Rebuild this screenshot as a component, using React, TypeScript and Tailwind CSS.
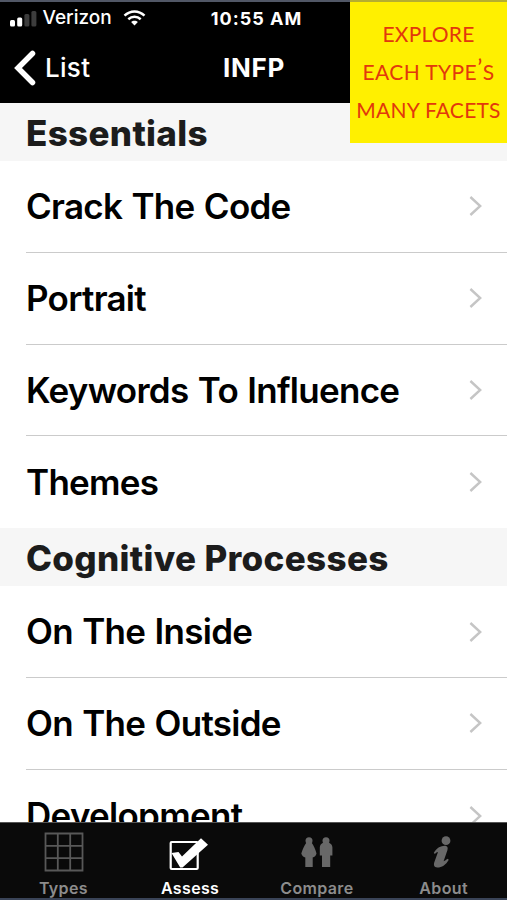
import type { ReactNode } from "react";
import clsx from "clsx";

const SECTIONS = [
  {
    title: "Essentials",
    rows: ["Crack The Code", "Portrait", "Keywords To Influence", "Themes"],
  },
  {
    title: "Cognitive Processes",
    rows: ["On The Inside", "On The Outside", "Development"],
  },
];

function SignalBars() {
  return (
    <svg width="28" height="18" viewBox="0 0 28 18" aria-hidden>
      <rect x="1" y="11" width="5" height="6.5" rx="1.5" fill="#fff" />
      <rect x="8.2" y="8.5" width="5" height="9" rx="1.5" fill="#fff" />
      <rect x="15.4" y="5" width="5" height="12.5" rx="1.5" fill="#3c3c3c" />
      <rect x="22.4" y="2" width="5" height="15.5" rx="1.5" fill="#3c3c3c" />
    </svg>
  );
}

function WifiIcon() {
  return (
    <svg width="23" height="16" viewBox="0 0 22 16" fill="none" aria-hidden>
      <path
        d="M1 5.6C6.8 0 15.2 0 21 5.6M4.8 9.2C8.4 6 13.6 6 17.2 9.2"
        stroke="#fff"
        strokeWidth="2.5"
      />
      <path d="M7.6 12.1C9.5 10.3 12.5 10.3 14.4 12.1L11 15.6Z" fill="#fff" />
    </svg>
  );
}

function Chevron() {
  return (
    <svg width="14" height="22" viewBox="0 0 14 22" fill="none" aria-hidden>
      <path d="M1.4 2L11.2 11L1.4 20" stroke="#c5c5c5" strokeWidth="2.4" />
    </svg>
  );
}

function GridIcon() {
  return (
    <svg width="40" height="40" viewBox="0 0 40 40" fill="none" aria-hidden>
      <path
        d="M1.5 1.5H38.5V38.5H1.5ZM13.8 1.5V38.5M26.2 1.5V38.5M1.5 13.8H38.5M1.5 26.2H38.5"
        stroke="#585858"
        strokeWidth="1.8"
      />
    </svg>
  );
}

function CheckIcon() {
  return (
    <svg width="40" height="34" viewBox="0 0 40 34" aria-hidden>
      <rect x="1.7" y="5" width="27" height="27" rx="1" fill="none" stroke="#fff" strokeWidth="2.2" />
      <path d="M2.5 16L9.5 15L13 19.5L32 1.2L39 7.8L13.5 30.5H11.2Z" fill="#fff" />
    </svg>
  );
}

function PeopleIcon() {
  return (
    <svg width="32" height="31" viewBox="0 0 32 31" fill="#686868" aria-hidden>
      <circle cx="8" cy="3.8" r="3.5" />
      <path d="M5.5 5.5H10.5C12.5 8 14.5 12.5 15.5 16.5C15 18.8 13.5 20.2 11.7 20.5V30H4.3V20.5C2.5 20.2 1 18.8 0.3 16.5C1.5 12.5 3.5 8 5.5 5.5Z" />
      <circle cx="25" cy="3.8" r="3.5" />
      <path d="M22.5 5.5H27.5Q31.4 7 31.4 10.5V18.5H29.2V30H21V18.5H18.8V10.5Q18.8 7 22.5 5.5Z" />
    </svg>
  );
}

function InfoIcon() {
  return (
    <svg width="18" height="32" viewBox="0 0 18 32" aria-hidden>
      <circle cx="13" cy="4.7" r="4.4" fill="#686868" />
      <path
        d="M0.8 16.8C4 11.5 8 10 11.5 9.8C14.8 9.8 15.1 12 14.4 14.2L10.6 25.2C12 25 13.2 24 14.4 22.8L15.8 23.7C12.8 29.3 7.8 31.8 4.2 31.5C1 31.3 0.4 29 1.4 26L5 16.1C3.9 16.1 3 16.9 1.8 18.1Z"
        fill="#686868"
      />
    </svg>
  );
}

function Tab({ label, active, children }: { label: string; active?: boolean; children: ReactNode }) {
  return (
    <button
      type="button"
      className={clsx(
        "flex flex-1 flex-col items-center",
        active ? "text-white" : "text-[#8c8c8c]",
      )}
    >
      <span className="flex h-[56px] items-center justify-center pt-0.5 pl-px">{children}</span>
      <span className="text-[16px] leading-[19px] font-semibold tracking-[0.35px]">{label}</span>
    </button>
  );
}

function Section({ title, rows }: { title: string; rows: string[] }) {
  return (
    <section>
      <h2 className="flex h-[58px] items-center bg-[#f6f6f6] pt-[3px] pl-[26px] text-[35px] font-extrabold tracking-[0.33px] text-[#1c1c1c]">
        {title}
      </h2>
      <ul className="pl-[26px]">
        {rows.map((row) => (
          <li
            key={row}
            className="flex h-[91.8px] items-center justify-between border-b-[1.5px] border-[#cbcbcb] pr-[24px] text-[35px] font-semibold tracking-[-0.72px] [word-spacing:1.2px] last:border-b-0"
          >
            <span>{row}</span>
            <Chevron />
          </li>
        ))}
      </ul>
    </section>
  );
}

export default function App() {
  return (
    <div className="relative flex h-[900px] w-[507px] flex-col overflow-hidden bg-white font-['Inter',sans-serif] text-black">
      <header className="h-[103px] shrink-0 border-t-2 border-[#515766] bg-black text-white">
        <div className="grid h-[32px] grid-cols-3 items-center">
          <div className="flex items-center pl-[9px]">
            <SignalBars />
            <span className="ml-[5.5px] text-[19px] font-medium">Verizon</span>
            <span className="ml-[11px]">
              <WifiIcon />
            </span>
          </div>
          <span className="pl-[6px] text-center text-[18px] font-bold tracking-[1px]">10:55 AM</span>
        </div>
        <div className="grid h-[67px] grid-cols-3 items-center">
          <button type="button" className="flex items-center pl-[14px] text-[26px]">
            <svg width="23" height="36" viewBox="0 0 23 36" fill="none" aria-hidden>
              <path
                d="M18.5 3.5L4 18L18.5 32.5"
                stroke="#fff"
                strokeWidth="5.5"
                strokeLinecap="round"
              />
            </svg>
            <span className="ml-[8px] font-medium tracking-[0.3px]">List</span>
          </button>
          <h1 className="pl-px text-center text-[26px] font-bold tracking-[0.7px]">INFP</h1>
        </div>
      </header>

      <main className="min-h-0 flex-1 overflow-hidden">
        {SECTIONS.map((section) => (
          <Section key={section.title} {...section} />
        ))}
      </main>

      <nav className="flex h-[78px] shrink-0 border-t border-b-2 border-t-[#555] border-b-[#3a4458] bg-[#0a0a0a]">
        <Tab label="Types">
          <GridIcon />
        </Tab>
        <Tab label="Assess" active>
          <span className="pt-1 pr-[3px]">
            <CheckIcon />
          </span>
        </Tab>
        <Tab label="Compare">
          <PeopleIcon />
        </Tab>
        <Tab label="About">
          <span className="pr-[4px]">
            <InfoIcon />
          </span>
        </Tab>
      </nav>

      <aside className="absolute top-0 right-0 flex h-[143px] w-[157px] flex-col items-center border-t-2 border-[#b5ae30] bg-[#fff000] pt-[13px] font-['Lato',sans-serif] text-[21px] leading-[38px] whitespace-nowrap text-[#e2380c]">
        <span className="tracking-[0.2px]">EXPLORE</span>
        <span className="tracking-[0.4px]">
          EACH TYPE<span className="relative -top-1 text-[24px] leading-none">’</span>S
        </span>
        <span className="tracking-[0.25px]">MANY FACETS</span>
      </aside>
    </div>
  );
}
